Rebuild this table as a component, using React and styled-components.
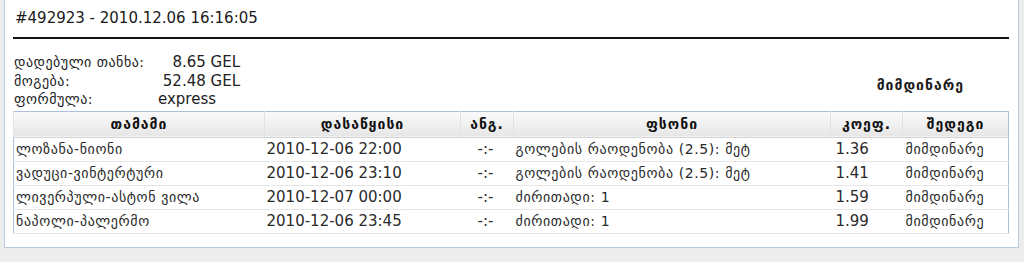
import React from "react";
import styled, { createGlobalStyle } from "styled-components";

const GlobalStyle = createGlobalStyle`
  html, body {
    margin: 0;
    padding: 0;
    background: #ededed;
  }
  body {
    font-family: "DejaVu Sans", Verdana, sans-serif;
    color: #1a1a1a;
  }
`;

const Page = styled.div`
  padding: 0 5px 0 4px;
  height: 262px;
  box-sizing: border-box;
`;

const Panel = styled.div`
  background: #fff;
  border: 1px solid #b9c9e2;
  border-top: none;
  height: 248px;
  box-sizing: border-box;
  padding: 6px 9px 0 8px;
`;

const Title = styled.div`
  font-size: 15px;
  line-height: 24px;
  padding: 0 0 0 2px;
  border-bottom: 2px solid #111;
  height: 31px;
`;

const Info = styled.div`
  display: flex;
  align-items: center;
  padding: 14px 0 0 1px;
`;

const InfoGrid = styled.div`
  display: grid;
  grid-template-columns: 144px 82px;
  grid-auto-rows: 18.5px;
  align-items: center;
`;

const Label = styled.div`
  font-size: 14px;
  letter-spacing: 0.5px;
  color: #222;
  white-space: nowrap;
`;

const Value = styled.div`
  font-size: 15px;
  color: #222;
  text-align: ${(p) => (p.$left ? "left" : "right")};
  white-space: nowrap;
`;

const Status = styled.div`
  margin-left: auto;
  margin-right: 45px;
  font-size: 14px;
  letter-spacing: 1px;
  font-weight: bold;
  padding-top: 8px;
`;

const Table = styled.table`
  width: 100%;
  border-collapse: collapse;
  border: 1px solid #aac0dc;
  margin-top: 2px;
`;

const Th = styled.th`
  height: 25px;
  padding: 0;
  font-size: 14px;
  letter-spacing: 1px;
  font-weight: bold;
  color: #111;
  text-align: center;
  background: linear-gradient(#fafafa, #e6e6e6);
  border-left: 1px solid #dde3ea;
  border-bottom: 1px solid #d4d4d4;
  width: ${(p) => p.$w}px;
`;

const Td = styled.td`
  height: 23px;
  padding: 0 ${(p) => p.$pr || 0}px 0 ${(p) => p.$pl || 2}px;
  font-size: ${(p) => (p.$geo ? 14 : 15)}px;
  letter-spacing: ${(p) => (p.$geo ? 0.6 : 0)}px;
  text-align: ${(p) => p.$align || "left"};
  border-bottom: 1px solid #e6e6e6;
  white-space: nowrap;
  color: #2a2a2a;
`;

const rows = [
  ["ლოზანა-ნიონი", "2010-12-06 22:00", "გოლების რაოდენობა (2.5): მეტ", "1.36"],
  ["ვადუცი-ვინტერტური", "2010-12-06 23:10", "გოლების რაოდენობა (2.5): მეტ", "1.41"],
  ["ლივერპული-ასტონ ვილა", "2010-12-07 00:00", "ძირითადი: 1", "1.59"],
  ["ნაპოლი-პალერმო", "2010-12-06 23:45", "ძირითადი: 1", "1.99"],
];

export default function App() {
  return (
    <Page>
      <GlobalStyle />
      <Panel>
        <Title>#492923 - 2010.12.06 16:16:05</Title>
        <Info>
          <InfoGrid>
            <Label>დადებული თანხა:</Label>
            <Value>8.65 GEL</Value>
            <Label>მოგება:</Label>
            <Value>52.48 GEL</Value>
            <Label>ფორმულა:</Label>
            <Value $left>express</Value>
          </InfoGrid>
          <Status>მიმდინარე</Status>
        </Info>
        <Table>
          <thead>
            <tr>
              <Th $w={250}>თამამი</Th>
              <Th $w={195}>დასაწყისი</Th>
              <Th $w={52}>ანგ.</Th>
              <Th $w={316}>ფსონი</Th>
              <Th $w={71}>კოეფ.</Th>
              <Th>შედეგი</Th>
            </tr>
          </thead>
          <tbody>
            {rows.map((r) => (
              <tr key={r[0]}>
                <Td $geo>{r[0]}</Td>
                <Td>{r[1]}</Td>
                <Td $align="right" $pr={20}>-:-</Td>
                <Td $geo>{r[2]}</Td>
                <Td $pl={5}>{r[3]}</Td>
                <Td $geo $pl={3}>მიმდინარე</Td>
              </tr>
            ))}
          </tbody>
        </Table>
      </Panel>
    </Page>
  );
}
